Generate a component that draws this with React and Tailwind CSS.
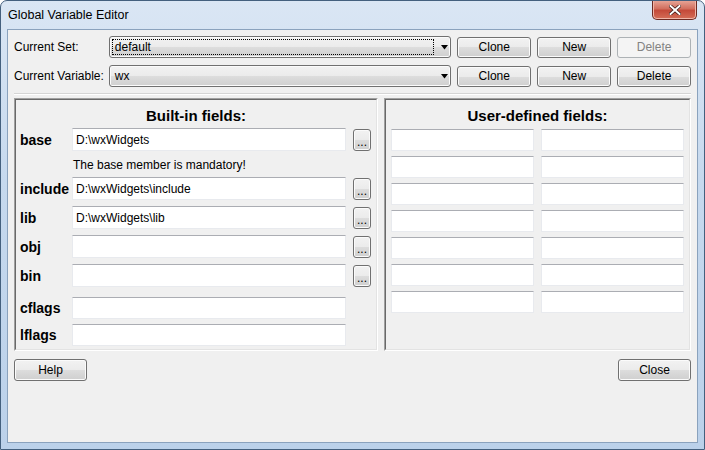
import React from 'react';

const font = "font-['Liberation_Sans',Arial,sans-serif]";

function Button({ children, disabled, className = '' }) {
  return (
    <div
      className={
        'flex items-center justify-center rounded-[3px] border text-[12px] ' +
        (disabled
          ? 'border-[#adb2b5] bg-[#f4f4f4] text-[#838383] '
          : 'border-[#707070] bg-[linear-gradient(to_bottom,#f2f2f2_0%,#ebebeb_50%,#dddddd_50%,#cfcfcf_100%)] text-black shadow-[inset_0_0_0_1px_#fbfbfb] ') +
        className
      }
    >
      {children}
    </div>
  );
}

function Combo({ value, focused }) {
  return (
    <div className="flex h-[22px] w-[343px] items-center rounded-[3px] border border-[#707070] bg-[linear-gradient(to_bottom,#f2f2f2_0%,#ebebeb_50%,#dddddd_50%,#cfcfcf_100%)] shadow-[inset_0_0_0_1px_#fbfbfb]">
      <div
        className={
          'ml-[2px] flex h-[16px] w-[322px] items-center pl-[2px] text-[12px] ' +
          (focused ? 'border border-dotted border-black' : 'border border-transparent')
        }
      >
        {value}
      </div>
      <svg width="8" height="5" viewBox="0 0 8 5" className="ml-[7px]">
        <path d="M0 0 H7 L3.5 4.5 Z" fill="#000" />
      </svg>
    </div>
  );
}

function Field({ value = '', className = '' }) {
  return (
    <div
      className={
        'flex items-center border border-[#e8eaee] border-t-[#abadb3] bg-white pl-[3px] text-[12px] ' + className
      }
    >
      {value}
    </div>
  );
}

function Dots() {
  return (
    <Button className="h-[22px] w-[18px] items-end pb-[3px] text-[10px] leading-[10px] text-[#1f3550]">
      ...
    </Button>
  );
}

function Panel({ children, className = '' }) {
  return (
    <div className={'border border-[#a0a0a0] border-b-white border-r-white ' + className}>
      <div className="flex h-full flex-col border border-[#696969] border-b-[#e3e3e3] border-r-[#e3e3e3]">
        {children}
      </div>
    </div>
  );
}

const builtIn = [
  { name: 'base', value: 'D:\\wxWidgets', mt: 'mt-[2px]' },
  { name: 'include', value: 'D:\\wxWidgets\\include', mt: 'mt-[5px]' },
  { name: 'lib', value: 'D:\\wxWidgets\\lib', mt: 'mt-[6px]' },
  { name: 'obj', value: '', mt: 'mt-[6px]' },
  { name: 'bin', value: '', mt: 'mt-[6px]' },
];

export default function App() {
  return (
    <div
      className={
        font +
        ' relative flex h-[450px] w-[705px] flex-col overflow-hidden rounded-t-[7px] border border-[#44607e] bg-[linear-gradient(to_bottom,#dae6f4,#c6d9ee_40%,#bbd1ea)] px-[6px] pb-[6px]'
      }
    >
      {/* title bar */}
      <div className="flex h-[28px] items-center pl-[1px] pt-[1px] text-[12.5px] text-black">Global Variable Editor</div>
      <div className="absolute right-[7px] top-[-1px] flex h-[20px] w-[45px] items-center justify-center rounded-b-[5px] border border-t-0 border-[#6d2a22] bg-[linear-gradient(to_bottom,#e9a99b,#d2705f_45%,#c44a39_55%,#d46e58)] shadow-[inset_0_0_0_1px_#f0b6a8]">
        <svg width="12" height="10" viewBox="0 0 12 10">
          <path d="M1.5 1 L10.5 9 M10.5 1 L1.5 9" stroke="#3a1612" strokeWidth="3.4" strokeLinecap="square" />
          <path d="M1.5 1 L10.5 9 M10.5 1 L1.5 9" stroke="#fff" strokeWidth="2" strokeLinecap="square" />
        </svg>
      </div>

      {/* client area */}
      <div className="flex flex-1 flex-col border border-[#8aa2bd] bg-[#f0f0f0] px-[6px] text-black">
        <div className="mt-[6px] flex h-[22px] items-center">
          <div className="w-[95px] text-[12px]">Current Set:</div>
          <Combo value="default" focused />
          <Button className="ml-[6px] h-[21px] w-[74px]">Clone</Button>
          <Button className="ml-[6px] h-[21px] w-[74px]">New</Button>
          <Button disabled className="ml-[6px] h-[21px] w-[74px]">Delete</Button>
        </div>
        <div className="mt-[7px] flex h-[22px] items-center">
          <div className="w-[95px] text-[12px]">Current Variable:</div>
          <Combo value="wx" />
          <Button className="ml-[6px] h-[21px] w-[74px]">Clone</Button>
          <Button className="ml-[6px] h-[21px] w-[74px]">New</Button>
          <Button className="ml-[6px] h-[21px] w-[74px]">Delete</Button>
        </div>

        <div className="mt-[6px] h-[2px] border-t border-[#d5d5d5] border-b border-b-white" />

        <div className="mt-[3px] flex h-[253px] gap-[6px]">
          <Panel className="w-[364px]">
            <div className="mt-[6px] h-[20px] text-center text-[15px] font-bold leading-[20px]">Built-in fields:</div>
            {builtIn.map((f, i) => (
              <React.Fragment key={f.name}>
                <div className={'flex h-[23px] items-center ' + f.mt}>
                  <div className="w-[56px] pl-[4px] pt-[1px] text-[14px] font-bold">{f.name}</div>
                  <Field value={f.value} className="h-[23px] w-[274px]" />
                  <div className="ml-[7px]">
                    <Dots />
                  </div>
                </div>
                {i === 0 && (
                  <div className="mt-[7px] h-[14px] pl-[57px] text-[12px] leading-[14px]">
                    The base member is mandatory!
                  </div>
                )}
              </React.Fragment>
            ))}
            <div className="mt-[10px] flex h-[22px] items-center">
              <div className="w-[56px] pl-[4px] pt-[1px] text-[14px] font-bold">cflags</div>
              <Field className="h-[22px] w-[274px]" />
            </div>
            <div className="mt-[5px] flex h-[22px] items-center">
              <div className="w-[56px] pl-[4px] pt-[1px] text-[14px] font-bold">lflags</div>
              <Field className="h-[22px] w-[274px]" />
            </div>
          </Panel>

          <Panel className="w-[307px]">
            <div className="mt-[6px] h-[20px] text-center text-[15px] font-bold leading-[20px]">User-defined fields:</div>
            <div className="mt-[3px] flex flex-col gap-[5px] pl-[5px]">
              {[0, 1, 2, 3, 4, 5, 6].map((r) => (
                <div key={r} className="flex gap-[7px]">
                  <Field className="h-[22px] w-[143px]" />
                  <Field className="h-[22px] w-[143px]" />
                </div>
              ))}
            </div>
          </Panel>
        </div>

        <div className="mt-[8px] flex justify-between">
          <Button className="h-[22px] w-[73px]">Help</Button>
          <Button className="h-[22px] w-[73px]">Close</Button>
        </div>
      </div>
    </div>
  );
}
